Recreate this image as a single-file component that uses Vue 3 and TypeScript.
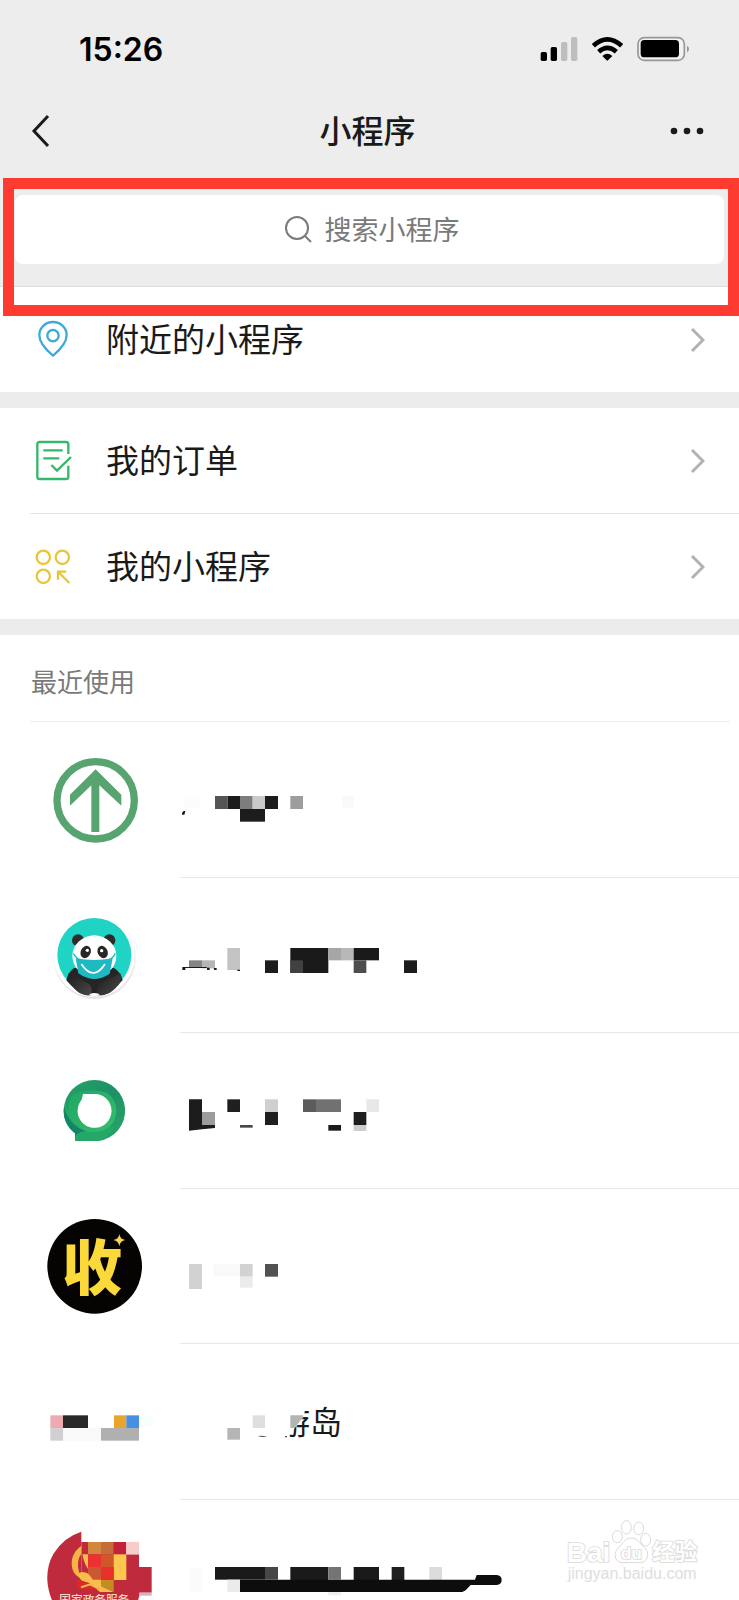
<script setup lang="ts">
import { ref } from 'vue'

type Block = [x: number, y: number, w: number, h: number, fill: string]

interface RecentItem {
  id: string
  label: string
  originY: number
  blocks: Block[]
}

const query = ref('')

const recent: RecentItem[] = [
  {
    id: 'arrow',
    label: '小程序 1',
    originY: -24,
    blocks: [
      [550, 200, 52, 34, '#fcfcfc'],
      [645, 198, 38, 39, '#555555'],
      [683, 198, 37, 39, '#1c1c1c'],
      [720, 198, 38, 39, '#7d7d7d'],
      [758, 198, 37, 39, '#cacaca'],
      [795, 198, 39, 39, '#1c1c1c'],
      [720, 237, 75, 38, '#1c1c1c'],
      [871, 198, 38, 39, '#9d9d9d'],
      [1027, 198, 33, 36, '#f9f9f9'],
    ],
  },
  {
    id: 'panda',
    label: '小程序 2',
    originY: -36,
    blocks: [
      [567, 211, 39, 22, '#858585'],
      [606, 211, 39, 24, '#b5b5b5'],
      [682, 174, 38, 66, '#c3c3c3'],
      [795, 211, 39, 38, '#1c1c1c'],
      [871, 174, 114, 75, '#1a1a1a'],
      [871, 211, 38, 38, '#414141'],
      [985, 174, 38, 37, '#a6a6a6'],
      [1023, 174, 38, 37, '#b8b8b8'],
      [1061, 174, 76, 37, '#1a1a1a'],
      [1061, 211, 38, 38, '#4d4d4d'],
      [1212, 211, 39, 38, '#1c1c1c'],
    ],
  },
  {
    id: 'ring',
    label: '小程序 3',
    originY: -51,
    blocks: [
      [606, 186, 39, 39, '#9c9c9c'],
      [682, 148, 38, 38, '#1f1f1f'],
      [720, 225, 38, 8, '#484848'],
      [795, 148, 39, 38, '#cfcfcf'],
      [795, 186, 39, 39, '#1f1f1f'],
      [909, 148, 39, 38, '#5c5c5c'],
      [948, 148, 75, 38, '#717171'],
      [985, 225, 38, 17, '#1a1a1a'],
      [1061, 186, 38, 39, '#1f1f1f'],
      [1061, 225, 38, 18, '#cdcdcd'],
      [1099, 148, 38, 38, '#e8e8e8'],
    ],
  },
  {
    id: 'shou',
    label: '小程序 4',
    originY: -33,
    blocks: [
      [567, 192, 39, 75, '#d2d2d2'],
      [640, 192, 80, 36, '#f9f9f9'],
      [720, 192, 38, 38, '#d2d2d2'],
      [720, 230, 38, 33, '#ebebeb'],
      [795, 192, 39, 38, '#515151'],
    ],
  },
  {
    id: 'mosaic',
    label: '小程序 5',
    originY: -108,
    blocks: [
      [682, 144, 38, 35, '#b5b5b5'],
      [758, 106, 37, 38, '#dedede'],
    ],
  },
  {
    id: 'gov',
    label: '国家政务服务',
    originY: 0,
    blocks: [
      [567, 205, 40, 70, '#fbfbfb'],
      [645, 201, 150, 38, '#1a1a1a'],
      [795, 201, 39, 38, '#464646'],
      [682, 239, 38, 37, '#ebebeb'],
      [871, 201, 114, 39, '#1a1a1a'],
      [985, 201, 38, 38, '#747474'],
      [1061, 201, 76, 40, '#1a1a1a'],
      [1175, 201, 38, 40, '#1f1f1f'],
      [1288, 201, 38, 40, '#dcdcdc'],
      [985, 276, 38, 10, '#efefef'],
    ],
  },
]

const mosaicIcon: Block[] = [
  [151, 106, 38, 38, '#efa9b1'],
  [189, 106, 75, 38, '#292929'],
  [342, 106, 37, 38, '#e9a52b'],
  [379, 106, 38, 38, '#478fe0'],
  [417, 106, 42, 34, '#f8fefe'],
  [151, 144, 38, 38, '#d0d0d0'],
  [189, 144, 114, 38, '#f9f9f9'],
  [303, 144, 114, 38, '#b0b0b0'],
]

const govIcon: Block[] = [
  [244, 126, 134, 150, '#bf2b3c'],
  [378, 163, 39, 113, '#bf2b3c'],
  [417, 201, 38, 77, '#bf2b3c'],
  [417, 278, 38, 9, '#d3b5b8'],
  [264, 126, 39, 37, '#d0883b'],
  [303, 126, 38, 37, '#c66c38'],
  [341, 126, 38, 37, '#c3233a'],
  [379, 126, 38, 37, '#f6cccc'],
  [264, 163, 39, 38, '#ed3030'],
  [303, 163, 38, 38, '#d1562a'],
  [341, 163, 38, 77, '#ffc64f'],
  [264, 201, 39, 39, '#cc5732'],
  [303, 201, 38, 39, '#ea302b'],
]
</script>

<template>
  <div class="page">
    <header class="top">
      <div class="status">
        <time class="clock">15:26</time>
        <svg class="status-icons" viewBox="51 42 462 90" aria-hidden="true">
          <rect x="62" y="96" width="19" height="27" rx="5" />
          <rect x="92" y="81" width="19" height="42" rx="5" />
          <rect x="123" y="66" width="19" height="57" rx="5" fill="#bebebe" />
          <rect x="153" y="51" width="19" height="72" rx="5" fill="#bebebe" />
          <g fill="none" stroke="#000" stroke-width="14">
            <path d="M220 77 Q262 39 305 77" />
            <path d="M236 95 Q262 72 289 95" />
          </g>
          <path d="M247 108 Q262 94 277 108 L264 121 Q262 123 260 121 Z" />
          <rect x="354" y="53" width="139" height="68" rx="19" fill="#f2f2f2" stroke="#979797" stroke-width="5" />
          <rect x="362" y="60" width="115" height="52" rx="11" />
          <path d="M501 77 Q507 80 507 87 Q507 94 501 97 Z" fill="#979797" />
        </svg>
      </div>
      <nav class="navbar">
        <button class="icon-btn back" type="button" aria-label="返回">
          <svg width="22" height="36" viewBox="0 0 22 36" fill="none" stroke="#1a1a1a" stroke-width="3">
            <path d="M18 3 L4 18 L18 33" />
          </svg>
        </button>
        <h1 class="title">小程序</h1>
        <button class="icon-btn more" type="button" aria-label="更多">
          <svg width="36" height="10" viewBox="0 0 36 10" fill="#1a1a1a">
            <circle cx="5" cy="5" r="3.3" />
            <circle cx="18" cy="5" r="3.3" />
            <circle cx="31" cy="5" r="3.3" />
          </svg>
        </button>
      </nav>
      <div class="search-area">
        <label class="search">
          <svg width="28" height="28" viewBox="0 0 28 28" fill="none" stroke="#7a7a7a" stroke-width="2">
            <circle cx="12" cy="12" r="11" />
            <path d="M20 20 L26 26" />
          </svg>
          <input v-model="query" class="search-input" type="text" placeholder="搜索小程序" aria-label="搜索小程序" />
        </label>
        <div class="highlight"></div>
      </div>
    </header>

    <main>
      <section class="group">
        <a class="entry" href="#nearby">
          <svg class="entry-icon" viewBox="99 57 123 123" fill="none" stroke="#3fa9da" stroke-width="7">
            <path d="M159 167 Q118 133 118 105 A41 39 0 0 1 200 105 Q200 133 159 167 Z" stroke-linejoin="round" />
            <circle cx="159" cy="107" r="17" />
          </svg>
          <span class="entry-text">附近的小程序</span>
          <svg class="chevron" viewBox="0 0 16 26"><path d="M3 2 L14 13 L3 24" /></svg>
        </a>
      </section>

      <section class="group">
        <a class="entry ruled" href="#orders">
          <svg class="entry-icon" viewBox="99 420 123 123" fill="none" stroke="#35b86b" stroke-width="7">
            <path d="M205 462 V433 Q205 426 198 426 H119 Q112 426 112 433 V530 Q112 537 119 537 H198 Q205 537 205 530 V497" />
            <path d="M130 451 H188 M130 475 H178 M154 495 L171 512 L213 471" />
          </svg>
          <span class="entry-text">我的订单</span>
          <svg class="chevron" viewBox="0 0 16 26"><path d="M3 2 L14 13 L3 24" /></svg>
        </a>
        <a class="entry" href="#mine">
          <svg class="entry-icon" viewBox="99 738 123 123" fill="none" stroke="#e8c63a" stroke-width="7">
            <circle cx="130" cy="772" r="20" />
            <circle cx="187" cy="772" r="20" />
            <circle cx="130" cy="829" r="20" />
            <path d="M174 839 V815 H199 M175 816 L208 849" />
          </svg>
          <span class="entry-text">我的小程序</span>
          <svg class="chevron" viewBox="0 0 16 26"><path d="M3 2 L14 13 L3 24" /></svg>
        </a>
      </section>

      <section class="recent">
        <h2 class="recent-title">最近使用</h2>
        <ul class="recent-list">
          <li v-for="item in recent" :key="item.id" class="recent-row">
            <a class="recent-link" :href="'#' + item.id" :aria-label="item.label">
              <svg class="avatar" :viewBox="`0 ${item.originY} 540 465`" aria-hidden="true">
                <g v-if="item.id === 'arrow'">
                  <circle cx="287" cy="211" r="116" fill="none" stroke="#58a471" stroke-width="22" />
                  <path d="M287 118 L364 194 V227 L298 166 V306 H274 V166 L210 227 V194 Z" fill="#58a471" />
                </g>

                <g v-else-if="item.id === 'panda'">
                  <defs>
                    <clipPath id="panda-clip"><circle cx="283" cy="202" r="117" /></clipPath>
                    <linearGradient id="arm" x1="0" y1="0" x2="1" y2="1">
                      <stop offset="0" stop-color="#1d1d1d" />
                      <stop offset="1" stop-color="#4a4a4a" />
                    </linearGradient>
                  </defs>
                  <circle cx="284" cy="204" r="124" fill="#f4f4f5" />
                  <circle cx="284" cy="205" r="121" fill="#e4e4e6" />
                  <circle cx="283" cy="200" r="121" fill="#fff" />
                  <circle cx="283" cy="195" r="111" fill="#1fd3c5" />
                  <g clip-path="url(#panda-clip)">
                    <path d="M222 234 Q204 246 199 271 Q225 303 263 320 H303 Q342 303 368 270 Q361 245 342 234 Z" fill="#252525" />
                    <path d="M246 318 Q283 300 320 318 V325 H246 Z" fill="#fff" />
                    <path d="M206 250 Q199 272 222 295 Q238 312 255 318 Q274 318 275 300 Q275 283 257 277 Z" fill="url(#arm)" />
                    <path d="M361 250 Q371 272 345 296 Q328 312 312 318 Q293 318 291 300 Q290 282 309 277 Z" fill="url(#arm)" />
                  </g>
                  <circle cx="234" cy="151" r="18" fill="#2c2c2c" />
                  <circle cx="328" cy="151" r="18" fill="#2c2c2c" />
                  <ellipse cx="283" cy="198" rx="66" ry="62" fill="#fff" />
                  <path d="M220 190 Q230 207 238 208 M346 190 Q337 207 328 208" fill="none" stroke="#17bfc3" stroke-width="4" />
                  <path d="M227 205 Q283 215 338 205 L329 251 Q306 267 281 267 Q257 266 235 250 Z" fill="#1fb9c3" />
                  <path d="M244 222 Q280 276 315 222" fill="none" stroke="#fff" stroke-width="5" />
                  <ellipse cx="257" cy="186" rx="15" ry="19" fill="#272727" transform="rotate(25 257 186)" />
                  <ellipse cx="308" cy="186" rx="15" ry="19" fill="#272727" transform="rotate(-25 308 186)" />
                  <circle cx="262" cy="181" r="5" fill="#fff" />
                  <circle cx="305" cy="182" r="5" fill="#fff" />
                </g>

                <g v-else-if="item.id === 'ring'">
                  <defs>
                    <linearGradient id="ring-a" x1="0" y1="0" x2="1" y2="1">
                      <stop offset="0" stop-color="#26a568" />
                      <stop offset="0.5" stop-color="#1e8f67" />
                      <stop offset="1" stop-color="#29a866" />
                    </linearGradient>
                    <linearGradient id="ring-b" x1="0" y1="0" x2="1" y2="1">
                      <stop offset="0" stop-color="#20a663" />
                      <stop offset="1" stop-color="#34bf6d" />
                    </linearGradient>
                  </defs>
                  <path d="M284 90 A93 92 0 0 1 296 273 H225 V250 Q191 225 191 181 A93 92 0 0 1 284 90 Z" fill="url(#ring-a)" />
                  <path d="M218 134 Q270 112 323 129 Q352 153 349 189 Q342 234 296 250 Q238 255 218 222 Q191 178 218 134 Z" fill="url(#ring-b)" />
                  <path d="M199 153 Q200 218 258 244 Q300 253 349 222 Q326 266 292 273 H225 V250 Q184 213 199 153 Z" fill="#26a76a" />
                  <path d="M192 170 Q207 227 257 243 Q228 247 225 262 V250 Q185 217 192 170 Z" fill="#168467" />
                  <path d="M249 132 H290 A51 51 0 1 1 237 162 Q248 148 249 132 Z" fill="#fff" />
                </g>

                <g v-else-if="item.id === 'shou'">
                  <circle cx="284" cy="199" r="142" fill="#050403" />
                  <text class="shou" x="186" y="270">收</text>
                  <path d="M358 102 Q360 118 376 120 Q360 123 358 139 Q356 123 340 120 Q356 118 358 102 Z" fill="#f5d35a" />
                </g>

                <g v-else-if="item.id === 'mosaic'">
                  <rect v-for="(b, i) in mosaicIcon" :key="i" :x="b[0]" :y="b[1]" :width="b[2]" :height="b[3]" :fill="b[4]" />
                </g>

                <g v-else>
                  <path d="M244 95 Q190 112 160 162 Q140 198 142 240 Q144 275 158 305 H412 Q422 285 420 262 H244 Z" fill="#bf2b3c" />
                  <rect v-for="(b, i) in govIcon" :key="i" :x="b[0]" :y="b[1]" :width="b[2]" :height="b[3]" :fill="b[4]" />
                  <path d="M244 137 Q207 165 217 206 Q222 224 240 234 L237 216 Q228 183 244 161 Z" fill="#f5b445" />
                  <path d="M247 163 H264 V207 Q252 190 247 163 Z M237 218 Q252 213 265 221 L279 239 H303 V258 L341 276 H300 L268 249 Q244 248 237 231 Z" fill="#f8bd4b" />
                  <path d="M303 240 H341 V276 L303 258 Z" fill="#c58c1e" />
                  <path d="M232 238 L267 249 L298 266 H232 Z" fill="#dc2a2b" />
                  <path d="M243 262 L270 253 L295 265" fill="none" stroke="#f8bd4b" stroke-width="6" />
                  <text class="gov" x="178" y="313">国家政务服务</text>
                </g>
              </svg>

              <span class="name">
                <svg class="redacted" :viewBox="`540 ${item.originY} 1200 465`" aria-hidden="true">
                  <template v-if="item.id === 'mosaic'">
                    <text class="island" x="834" y="162">游岛</text>
                    <path d="M826 60 H914 V96 L910 112 L868 164 L860 184 H826 Z" fill="#fff" />
                    <path d="M871 106 H909 V112 L884 144 H871 Z" fill="#b4b4b4" />
                    <path d="M773 168 Q785 165 801 170 Q785 172 773 168 Z M855 168 h6 v4 h-6 Z" fill="#555" />
                  </template>
                  <rect v-for="(b, i) in item.blocks" :key="i" :x="b[0]" :y="b[1]" :width="b[2]" :height="b[3]" :fill="b[4]" />
                  <path v-if="item.id === 'arrow'" d="M546 249 L551 243 H556 L553 254 H547 Z" fill="#111" />
                  <path
                    v-if="item.id === 'panda'"
                    d="M547 231 H620 V233 H629 V240 H621 V234 H556 V240 H547 Z M641 234 H650 V240 H643 Z M711 239 H720 V243 H713 Z"
                    fill="#1a1a1a"
                  />
                  <path v-if="item.id === 'ring'" d="M567 148 H606 V225 H645 V234 L606 238 L567 242 Z" fill="#1c1c1c" />
                  <path
                    v-if="item.id === 'gov'"
                    d="M720 239 H1425 L1430 225 H1490 Q1505 227 1505 240 Q1505 253 1490 255 H1412 L1397 271 L1387 276 H720 Z"
                    fill="#0d0d0d"
                  />
                </svg>
              </span>
            </a>
          </li>
        </ul>
      </section>
    </main>

    <svg class="watermark" viewBox="570 80 429 210" aria-hidden="true">
      <text class="wm-brand" x="590" y="214">Bai</text>
      <g fill="#fff" stroke="#dadada" stroke-width="3">
        <ellipse cx="742" cy="139" rx="15" ry="18" />
        <ellipse cx="769" cy="111" rx="15" ry="20" />
        <ellipse cx="806" cy="114" rx="15" ry="19" />
        <ellipse cx="827" cy="148" rx="15" ry="19" />
        <path d="M784 143 C804 143 808 160 824 172 C838 184 837 214 812 217 H756 C732 214 730 188 744 174 C759 160 763 143 784 143 Z" />
      </g>
      <text class="wm-du" x="752" y="205">du</text>
      <text class="wm-cn" x="846" y="208">经验</text>
      <text class="wm-url" x="593" y="265">jingyan.baidu.com</text>
    </svg>
  </div>
</template>

<style>
body {
  margin: 0;
  background: #fff;
}
</style>

<style scoped>
.page {
  position: relative;
  overflow: hidden;
  background: #fff;
  color: #1a1a1a;
  font-family: "Liberation Sans", "Noto Sans CJK SC", sans-serif;
}
.top {
  background: #ededed;
}
.status {
  display: flex;
  align-items: center;
  justify-content: space-between;
  height: 98px;
  padding: 0 48px 0 79px;
}
.clock {
  padding-top: 2px;
  font: 600 32px/40px Inter, sans-serif;
  color: #000;
}
.status-icons {
  width: 154px;
  height: 30px;
}
.navbar {
  display: grid;
  grid-template-columns: 1fr auto 1fr;
  align-items: center;
  height: 66px;
  padding: 0 34px 0 30px;
}
.icon-btn {
  display: flex;
  padding: 0;
  border: 0;
  background: none;
}
.more {
  justify-self: end;
}
.title {
  margin: 0;
  padding-top: 2px;
  font-size: 32px;
  line-height: 48px;
  font-weight: 500;
}
.search-area {
  position: relative;
  padding: 31px 15px 22px;
  border-bottom: 1px solid #dcdcdc;
}
.search {
  display: flex;
  align-items: center;
  justify-content: center;
  gap: 12px;
  height: 69px;
  padding-left: 6px;
  border-radius: 8px;
  background: #fff;
}
.search-input {
  width: 136px;
  padding: 2px 0 0;
  border: 0;
  outline: 0;
  background: none;
  color: #1a1a1a;
  font-family: inherit;
  font-size: 27px;
  line-height: 40px;
}
.search-input::placeholder {
  color: #7a7a7a;
  opacity: 1;
}
.highlight {
  position: absolute;
  z-index: 1;
  top: 14px;
  left: 3px;
  right: 0;
  height: 116px;
  border: 11px solid #fd3b30;
  pointer-events: none;
}
.group {
  border-bottom: 16px solid #ececec;
}
.entry {
  position: relative;
  display: flex;
  align-items: center;
  gap: 32px;
  height: 105px;
  padding: 0 34px 0 33px;
  color: inherit;
  text-decoration: none;
}
.ruled {
  margin-left: 30px;
  padding-left: 3px;
  border-bottom: 1px solid #e4e4e4;
}
.entry-icon {
  flex: none;
  width: 41px;
  height: 41px;
}
.entry-text {
  flex: 1;
  padding-top: 2px;
  font-size: 33px;
  line-height: 48px;
}
.chevron {
  flex: none;
  width: 16px;
  height: 26px;
  fill: none;
  stroke: #b2b2b2;
  stroke-width: 3px;
}
.recent-title {
  margin: 0 9px 0 30px;
  padding: 28px 0 18px 1px;
  border-bottom: 1px solid #f0f0f0;
  color: #7a7a7a;
  font-size: 26px;
  line-height: 40px;
  font-weight: 400;
}
.recent-list {
  margin: 0;
  padding: 0;
  list-style: none;
}
.recent-link {
  display: flex;
  height: 155px;
}
.recent-row:nth-child(odd) .recent-link {
  height: 156px;
}
.recent-row:last-child .recent-link {
  height: 100px;
  overflow: hidden;
}
.avatar {
  flex: none;
  width: 180px;
  height: 155px;
}
.name {
  flex: 1;
  min-width: 0;
  border-bottom: 1px solid #e8e8e8;
}
.recent-row:last-child .name {
  border-bottom: 0;
}
.redacted {
  display: block;
  width: 400px;
  height: 155px;
  margin-bottom: -1px;
}
.shou {
  fill: #fbd93a;
  font: 900 180px "Noto Sans CJK SC", sans-serif;
}
.gov {
  fill: #f6d9c0;
  font: 500 35px "Noto Sans CJK SC", sans-serif;
}
.island {
  fill: #1a1a1a;
  font: 400 96px "Noto Sans CJK SC", sans-serif;
}
.watermark {
  position: absolute;
  right: 36px;
  bottom: 13px;
  width: 143px;
  height: 70px;
}
.watermark text {
  fill: #fff;
  stroke: #dadada;
  stroke-width: 5px;
  paint-order: stroke;
}
.watermark .wm-brand {
  font: 700 84px "Liberation Sans", sans-serif;
}
.watermark .wm-du {
  font: 700 52px "Liberation Sans", sans-serif;
}
.watermark .wm-cn {
  font: 700 68px "Noto Sans CJK SC", sans-serif;
}
.watermark .wm-url {
  fill: #dedede;
  stroke: none;
  font: 400 48px "Liberation Sans", sans-serif;
}
</style>
